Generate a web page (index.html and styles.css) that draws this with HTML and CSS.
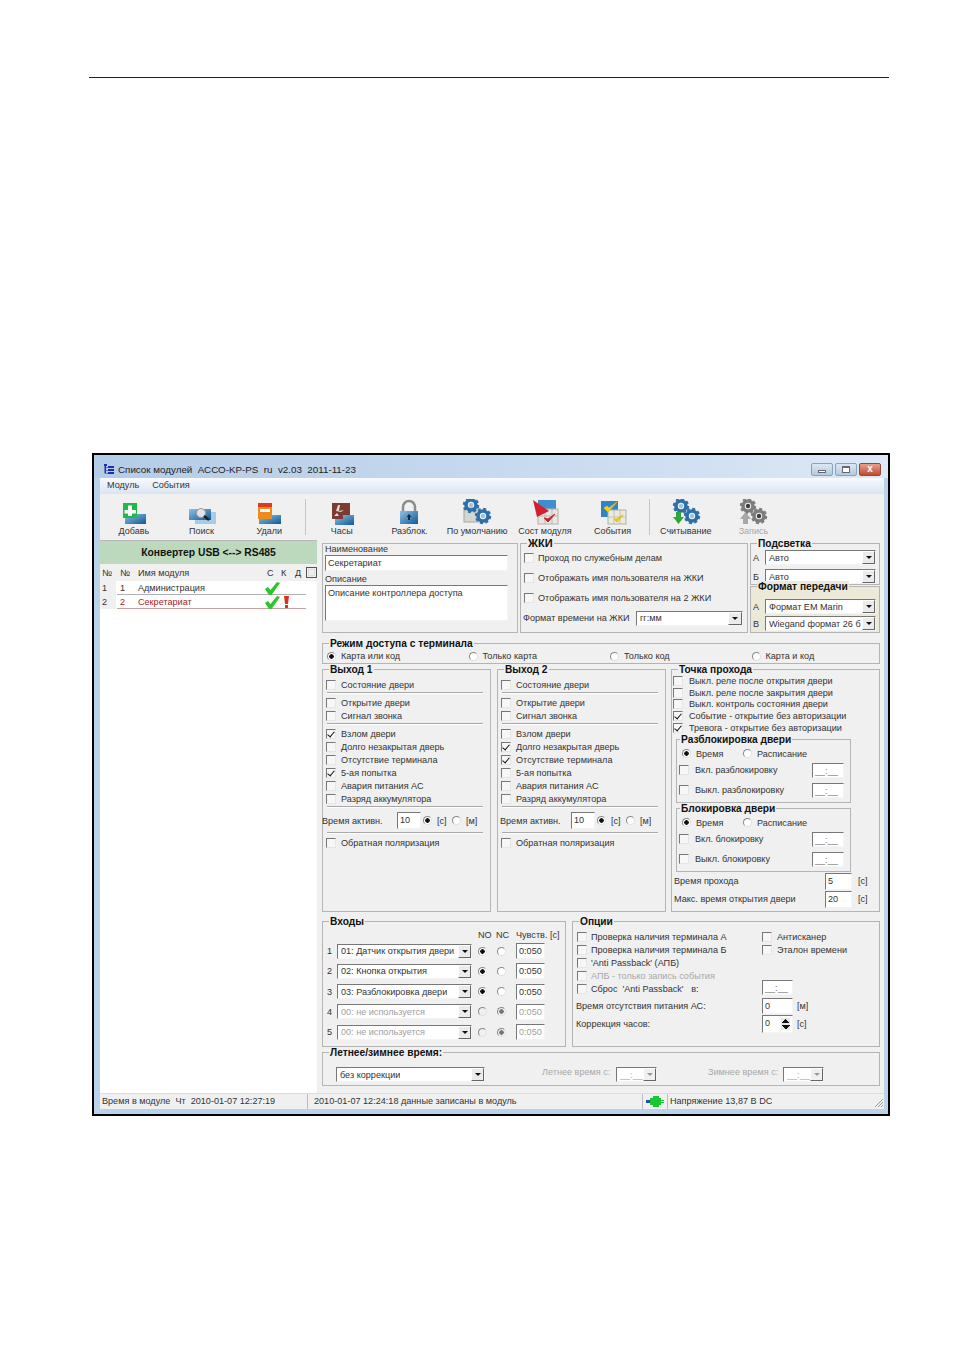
FILE: index.html
```html
<!DOCTYPE html>
<html lang="ru">
<head>
    <meta charset="UTF-8">
    <title>Список модулей АССО-KP-PS</title>
    <link rel="stylesheet" href="styles.css">
</head>
<body>
    <svg class="defs" width="0" height="0">
        <defs>
            <g id="gear-blue">
                <circle r="5" fill="none" stroke="#2f6fa8" stroke-width="3.6"/>
                <circle r="7" fill="none" stroke="#2f6fa8" stroke-width="2.4" stroke-dasharray="3 2.5"/>
                <circle r="2.2" fill="#9cc6e6"/>
            </g>
            <g id="gear-grey">
                <circle r="5" fill="none" stroke="#7d7d7d" stroke-width="3.6"/>
                <circle r="7" fill="none" stroke="#7d7d7d" stroke-width="2.4" stroke-dasharray="3 2.5"/>
                <circle r="2.2" fill="#3d3d3d"/>
            </g>
            <linearGradient id="card" x1="0" y1="0" x2="1" y2="1">
                <stop offset="0" stop-color="#8fc0e4"/>
                <stop offset="1" stop-color="#0f5a96"/>
            </linearGradient>
        </defs>
    </svg>

    <div class="rule"></div>

    <div class="window">
        <div class="titlebar">
            <svg class="app-icon" width="11" height="11" viewBox="0 0 11 11">
                <path d="M1 0h3v2H3v1h2V2h6v2H5V3.500H3V6h2V5h6v2H5V6.500H3V9h2V8h6v2H5V9.500H1.500V2H1z" fill="#1c2fb0"/>
            </svg>
            <span class="title-text">Список модулей&nbsp; АССО-KP-PS &nbsp;ru &nbsp;v2.03&nbsp; 2011-11-23</span>
            <div class="win-buttons">
                <span class="win-btn"><i class="glyph-min"></i></span>
                <span class="win-btn"><i class="glyph-max"></i></span>
                <span class="win-btn win-close">x</span>
            </div>
        </div>

        <div class="menubar">
            <span>Модуль</span>
            <span>События</span>
        </div>

        <div class="toolbar">
            <div class="tool">
                <svg width="30" height="26" viewBox="0 0 30 26">
                    <rect x="6" y="15" width="21" height="10" fill="url(#card)"/>
                    <rect x="4" y="4" width="14" height="15" fill="#21b84a"/>
                    <path d="M9 6.500h4v4.500h4v3.500h-4V17H9v-2.500H5.500V11H9z" fill="#fff"/>
                </svg>
                <span>Добавь</span>
            </div>
            <div class="tool">
                <svg width="30" height="26" viewBox="0 0 30 26">
                    <rect x="8" y="13" width="21" height="12" fill="#a9cbe6"/>
                    <rect x="2" y="10" width="22" height="11" fill="url(#card)"/>
                    <circle cx="14" cy="14" r="4.500" fill="#e4e4e4" stroke="#9a9a9a"/>
                    <path d="M17 17l5 4" stroke="#222" stroke-width="2.500"/>
                </svg>
                <span>Поиск</span>
            </div>
            <div class="tool">
                <svg width="30" height="26" viewBox="0 0 30 26">
                    <rect x="5" y="16" width="22" height="9" fill="url(#card)"/>
                    <rect x="4" y="4" width="14" height="16" fill="#ef8a1e"/>
                    <rect x="4" y="4" width="14" height="4" fill="#dd3b1c"/>
                    <rect x="6" y="10" width="10" height="3" fill="#fff"/>
                </svg>
                <span>Удали</span>
            </div>
            <div class="tool-sep"></div>
            <div class="tool">
                <svg width="30" height="26" viewBox="0 0 30 26">
                    <rect x="8" y="16" width="19" height="10" fill="url(#card)"/>
                    <path d="M5 4h18v12H16v4H5z" fill="#7b3b30"/>
                    <path d="M13 6l-1 6 5-1-3 2-5-1 2-6zM7 17l3-3 2 3z" fill="#e8d6d0"/>
                </svg>
                <span>Часы</span>
            </div>
            <div class="tool">
                <svg width="30" height="26" viewBox="0 0 30 26">
                    <path d="M9 12V8a6 6 0 0 1 12 0v4" fill="none" stroke="#8d8d8d" stroke-width="2.500"/>
                    <rect x="6" y="12" width="18" height="13" fill="url(#card)"/>
                    <path d="M15 15l2.500 3H16v3h-2v-3h-1.500z" fill="#0a2a44"/>
                </svg>
                <span>Разблок.</span>
            </div>
            <div class="tool">
                <svg width="30" height="26" viewBox="0 0 30 26">
                    <rect x="2" y="9" width="15" height="14" fill="#d6d6d0" stroke="#a5a5a0"/>
                    <use href="#gear-blue" x="9" y="6"/>
                    <use href="#gear-blue" x="21" y="17"/>
                </svg>
                <span>По умолчанию</span>
            </div>
            <div class="tool">
                <svg width="30" height="26" viewBox="0 0 30 26">
                    <rect x="8" y="1" width="18" height="15" fill="#3f8fd0"/>
                    <rect x="8" y="10" width="20" height="15" fill="#e6e6e2" stroke="#b0b0aa"/>
                    <path d="M15 10v15M22 10v15M8 17h20" stroke="#b9b9b4"/>
                    <path d="M3 1l16 11-12 6z" fill="#d3202c"/>
                    <path d="M14 19l4 4 7-8-7 5z" fill="#c8232b" stroke="#c8232b"/>
                </svg>
                <span>Сост модуля</span>
            </div>
            <div class="tool">
                <svg width="30" height="26" viewBox="0 0 30 26">
                    <rect x="3" y="2" width="17" height="16" fill="#2f83c8"/>
                    <rect x="10" y="11" width="18" height="14" fill="#ecebd9" stroke="#b0b0aa"/>
                    <path d="M16 11v14M22 11v14M10 18h18" stroke="#c2c2b8"/>
                    <path d="M6 9l4 4 9-10-8 6-2-2z" fill="#f2d21a" stroke="#e0bc10"/>
                    <path d="M16 20l3 3 6-7-6 4z" fill="#f2d21a" stroke="#e0bc10"/>
                </svg>
                <span>События</span>
            </div>
            <div class="tool-sep tool-sep-2"></div>
            <div class="tool">
                <svg width="30" height="26" viewBox="0 0 30 26">
                    <use href="#gear-blue" x="10" y="7"/>
                    <use href="#gear-blue" x="21" y="17"/>
                    <path d="M5 13h5v5h3l-5.500 7L2 18h3z" fill="#2fa63a"/>
                </svg>
                <span>Считывание</span>
            </div>
            <div class="tool tool-off">
                <svg width="30" height="26" viewBox="0 0 30 26">
                    <use href="#gear-grey" x="10" y="7"/>
                    <use href="#gear-grey" x="21" y="17"/>
                    <path d="M5 25v-5H2l5.500-7 5.500 7h-3v5z" fill="#a8a8a8"/>
                </svg>
                <span>Запись</span>
            </div>
        </div>

        <div class="workspace">
            <div class="modules">
                <div class="converter">Конвертер USB &lt;--&gt; RS485</div>
                <div class="mod-head">
                    <span class="col-a">№</span>
                    <span class="col-b">№</span>
                    <span class="col-name">Имя модуля</span>
                    <span class="col-c">С</span>
                    <span class="col-c">К</span>
                    <span class="col-c">Д</span>
                    <span class="mod-toggle"></span>
                </div>
                <div class="mod-row">
                    <span class="col-a">1</span>
                    <span class="col-b">1</span>
                    <span class="col-name">Администрация</span>
                    <svg class="tick" width="15" height="13" viewBox="0 0 15 13"><path d="M0 7l3-2 2.500 3L12 0l3 1-8.500 12h-2.500z" fill="#2cc52c"/></svg>
                </div>
                <div class="mod-row mod-alert">
                    <span class="col-a">2</span>
                    <span class="col-b">2</span>
                    <span class="col-name">Секретариат</span>
                    <svg class="tick" width="15" height="13" viewBox="0 0 15 13"><path d="M0 7l3-2 2.500 3L12 0l3 1-8.500 12h-2.500z" fill="#2cc52c"/></svg>
                    <svg class="bang" width="5" height="12" viewBox="0 0 5 12"><path d="M0 0h5l-1 8H1zM1 9h3v3H1z" fill="#d8321e"/></svg>
                </div>
            </div>

            <div class="panels">
                <div class="row-top">
                    <div class="group name-box">
                        <div class="cap">Наименование</div>
                        <div class="field name-field">Секретариат</div>
                        <div class="cap cap-second">Описание</div>
                        <div class="field memo">Описание контроллера доступа</div>
                    </div>

                    <div class="group lcd-box">
                        <div class="group-title lcd-title">ЖКИ</div>
                        <label class="line"><input type="checkbox">Проход по служебным делам</label>
                        <label class="line"><input type="checkbox">Отображать имя пользователя на ЖКИ</label>
                        <label class="line"><input type="checkbox">Отображать имя пользователя на 2 ЖКИ</label>
                        <div class="line lcd-format">
                            <span class="lcd-format-label">Формат времени на ЖКИ</span>
                            <div class="combo lcd-combo"><span>гг:мм</span><i class="drop"></i></div>
                        </div>
                    </div>

                    <div class="side-col">
                        <div class="group backlight">
                            <div class="group-title">Подсветка</div>
                            <div class="side-row"><span class="side-key">А</span><div class="combo"><span>Авто</span><i class="drop"></i></div></div>
                            <div class="side-row"><span class="side-key">Б</span><div class="combo"><span>Авто</span><i class="drop"></i></div></div>
                        </div>
                        <div class="group format">
                            <div class="group-title">Формат передачи</div>
                            <div class="side-row"><span class="side-key">А</span><div class="combo"><span>Формат EM Marin</span><i class="drop"></i></div></div>
                            <div class="side-row"><span class="side-key">В</span><div class="combo"><span>Wiegand формат 26 б</span><i class="drop"></i></div></div>
                        </div>
                    </div>
                </div>

                <div class="group access">
                    <div class="group-title">Режим доступа с терминала</div>
                    <label class="pick"><input type="radio" name="access" checked>Карта или код</label>
                    <label class="pick"><input type="radio" name="access">Только карта</label>
                    <label class="pick"><input type="radio" name="access">Только код</label>
                    <label class="pick"><input type="radio" name="access">Карта и код</label>
                </div>

                <div class="row-mid">
                    <div class="group output out-1">
                        <div class="group-title">Выход 1</div>
                        <label class="line"><input type="checkbox">Состояние двери</label>
                        <hr>
                        <label class="line"><input type="checkbox">Открытие двери</label>
                        <label class="line"><input type="checkbox">Сигнал звонка</label>
                        <hr>
                        <label class="line"><input type="checkbox" checked>Взлом двери</label>
                        <label class="line"><input type="checkbox">Долго незакрытая дверь</label>
                        <label class="line"><input type="checkbox">Отсутствие терминала</label>
                        <label class="line"><input type="checkbox" checked>5-ая попытка</label>
                        <label class="line"><input type="checkbox">Авария питания АС</label>
                        <label class="line"><input type="checkbox">Разряд аккумулятора</label>
                        <hr>
                        <div class="time-row">
                            <span class="time-label">Время активн.</span>
                            <div class="field time-field">10</div>
                            <input type="radio" name="t1" checked><span class="unit">[с]</span>
                            <input type="radio" name="t1"><span class="unit">[м]</span>
                        </div>
                        <hr>
                        <label class="line"><input type="checkbox">Обратная поляризация</label>
                    </div>

                    <div class="group output out-2">
                        <div class="group-title">Выход 2</div>
                        <label class="line"><input type="checkbox">Состояние двери</label>
                        <hr>
                        <label class="line"><input type="checkbox">Открытие двери</label>
                        <label class="line"><input type="checkbox">Сигнал звонка</label>
                        <hr>
                        <label class="line"><input type="checkbox">Взлом двери</label>
                        <label class="line"><input type="checkbox" checked>Долго незакрытая дверь</label>
                        <label class="line"><input type="checkbox" checked>Отсутствие терминала</label>
                        <label class="line"><input type="checkbox">5-ая попытка</label>
                        <label class="line"><input type="checkbox">Авария питания АС</label>
                        <label class="line"><input type="checkbox">Разряд аккумулятора</label>
                        <hr>
                        <div class="time-row">
                            <span class="time-label">Время активн.</span>
                            <div class="field time-field">10</div>
                            <input type="radio" name="t2" checked><span class="unit">[с]</span>
                            <input type="radio" name="t2"><span class="unit">[м]</span>
                        </div>
                        <hr>
                        <label class="line"><input type="checkbox">Обратная поляризация</label>
                    </div>

                    <div class="group point">
                        <div class="group-title">Точка прохода</div>
                        <label class="line-tight"><input type="checkbox">Выкл. реле после открытия двери</label>
                        <label class="line-tight"><input type="checkbox">Выкл. реле после закрытия двери</label>
                        <label class="line-tight"><input type="checkbox">Выкл. контроль состояния двери</label>
                        <label class="line-tight"><input type="checkbox" checked>Событие - открытие без авторизации</label>
                        <label class="line-tight"><input type="checkbox" checked>Тревога - открытие без авторизации</label>

                        <div class="group sub">
                            <div class="group-title">Разблокировка двери</div>
                            <div class="sub-mode">
                                <label class="sub-pick"><input type="radio" name="u" checked>Время</label>
                                <label class="sub-pick"><input type="radio" name="u">Расписание</label>
                            </div>
                            <div class="sub-row"><label class="sub-check"><input type="checkbox">Вкл. разблокировку</label><div class="field sub-field">__:__</div></div>
                            <div class="sub-row sub-row-2"><label class="sub-check"><input type="checkbox">Выкл. разблокировку</label><div class="field sub-field">__:__</div></div>
                        </div>

                        <div class="group sub sub-lock">
                            <div class="group-title">Блокировка двери</div>
                            <div class="sub-mode">
                                <label class="sub-pick"><input type="radio" name="l" checked>Время</label>
                                <label class="sub-pick"><input type="radio" name="l">Расписание</label>
                            </div>
                            <div class="sub-row"><label class="sub-check"><input type="checkbox">Вкл. блокировку</label><div class="field sub-field">__:__</div></div>
                            <div class="sub-row sub-row-2"><label class="sub-check"><input type="checkbox">Выкл. блокировку</label><div class="field sub-field">__:__</div></div>
                        </div>

                        <div class="pass-row"><span class="pass-label">Время прохода</span><div class="field pass-field">5</div><span>[с]</span></div>
                        <div class="pass-row"><span class="pass-label">Макс. время открытия двери</span><div class="field pass-field">20</div><span>[с]</span></div>
                    </div>
                </div>

                <div class="row-low">
                    <div class="group inputs">
                        <div class="group-title">Входы</div>
                        <div class="in-head"><span class="in-no">NO</span><span class="in-nc">NC</span><span class="in-sens">Чувств. [с]</span></div>
                        <div class="in-row"><span class="in-num">1</span><div class="combo in-combo"><span>01: Датчик открытия двери</span><i class="drop"></i></div><input type="radio" name="i1" checked><input type="radio" name="i1"><div class="field in-field">0:050</div></div>
                        <div class="in-row"><span class="in-num">2</span><div class="combo in-combo"><span>02: Кнопка открытия</span><i class="drop"></i></div><input type="radio" name="i2" checked><input type="radio" name="i2"><div class="field in-field">0:050</div></div>
                        <div class="in-row"><span class="in-num">3</span><div class="combo in-combo"><span>03: Разблокировка двери</span><i class="drop"></i></div><input type="radio" name="i3" checked><input type="radio" name="i3"><div class="field in-field">0:050</div></div>
                        <div class="in-row in-off"><span class="in-num">4</span><div class="combo in-combo"><span>00: не используется</span><i class="drop"></i></div><input type="radio" name="i4"><input type="radio" name="i4" checked><div class="field in-field">0:050</div></div>
                        <div class="in-row in-off"><span class="in-num">5</span><div class="combo in-combo"><span>00: не используется</span><i class="drop"></i></div><input type="radio" name="i5"><input type="radio" name="i5" checked><div class="field in-field">0:050</div></div>
                    </div>

                    <div class="group options">
                        <div class="group-title">Опции</div>
                        <div class="opt-row"><label class="opt-main"><input type="checkbox">Проверка наличия терминала А</label><label class="opt-alt"><input type="checkbox">Антисканер</label></div>
                        <div class="opt-row"><label class="opt-main"><input type="checkbox">Проверка наличия терминала Б</label><label class="opt-alt"><input type="checkbox">Эталон времени</label></div>
                        <div class="opt-row"><label class="opt-main"><input type="checkbox">'Anti Passback' (АПБ)</label></div>
                        <div class="opt-row opt-off"><label class="opt-main"><input type="checkbox">АПБ - только запись события</label></div>
                        <div class="opt-row"><label class="opt-main"><input type="checkbox">Сброс &nbsp;'Anti Passback' &nbsp;&nbsp;в:</label><div class="field opt-field opt-field-up">__:__</div></div>
                        <div class="opt-entry"><span class="opt-label">Время отсутствия питания АС:</span><div class="field opt-field">0</div><span class="opt-unit">[м]</span></div>
                        <div class="opt-entry opt-entry-2"><span class="opt-label">Коррекция часов:</span><div class="field opt-field opt-spin">0<i class="spin"></i></div><span class="opt-unit">[с]</span></div>
                    </div>
                </div>

                <div class="group summer">
                    <div class="group-title">Летнее/зимнее время:</div>
                    <div class="combo summer-combo"><span>без коррекции</span><i class="drop"></i></div>
                    <span class="summer-label summer-a">Летнее время с:</span>
                    <div class="combo small-combo"><span>__:__</span><i class="drop"></i></div>
                    <span class="summer-label summer-b">Зимнее время с:</span>
                    <div class="combo small-combo"><span>__:__</span><i class="drop"></i></div>
                </div>
            </div>
        </div>

        <div class="statusbar">
            <div class="st-cell st-time">Время в модуле &nbsp;Чт &nbsp;2010-01-07 12:27:19</div>
            <div class="st-cell st-msg">2010-01-07 12:24:18 данные записаны в модуль</div>
            <div class="st-cell st-plug">
                <svg width="18" height="11" viewBox="0 0 18 11"><path d="M0 4h4v3H0z" fill="#1f4fb4"/><path d="M4 2h3V0h6v2h2v2h3v1h-3v1h3v1h-3v2h-2v2H7V9H4z" fill="#19c733"/></svg>
            </div>
            <div class="st-cell st-volt">Напряжение 13,87 В DC</div>
            <svg class="grip" width="10" height="10" viewBox="0 0 10 10"><path d="M9 1L1 9M9 4L4 9M9 7L7 9" stroke="#9a9a9a"/></svg>
        </div>
    </div>
</body>
</html>
```

FILE: styles.css
```css
* {
    box-sizing: border-box;
}
body {
    margin: 0;
    background: #fff;
    font-family: "Liberation Sans", Arial, sans-serif;
    font-size: 9.1px;
    color: #333;
}
.defs {
    position: absolute;
}
.rule {
    width: 800px;
    height: 1px;
    margin: 77px 0 0 89px;
    background: #222;
}

/* window frame */
.window {
    display: flex;
    flex-direction: column;
    width: 798px;
    height: 663px;
    margin: 375px 0 0 92px;
    padding: 0 4px 5px 6px;
    border: 2px solid #000;
    background: #b9d3ec;
}
.titlebar {
    display: flex;
    align-items: center;
    height: 23px;
    flex: none;
    margin: 0 -4px 0 -6px;
    padding: 5px 7px 0 9px;
    background: linear-gradient(90deg, #b4cce6, #c6d9ee 50%, #dce8f6);
}
.app-icon {
    margin-right: 4px;
}
.title-text {
    font-size: 9.800px;
    color: #222;
}
.win-buttons {
    display: flex;
    gap: 2px;
    margin-left: auto;
}
.win-btn {
    display: flex;
    align-items: center;
    justify-content: center;
    width: 22px;
    height: 13px;
    border: 1px solid #8aa2bc;
    border-radius: 2px;
    background: linear-gradient(#dbe7f3, #b5c9dd);
}
.win-close {
    background: linear-gradient(#e8a08c, #c24a30);
    border-color: #8c4a3c;
    color: #fff;
    font-weight: bold;
    font-size: 10px;
    line-height: 1;
}
.glyph-min {
    width: 8px;
    height: 3px;
    margin-top: 5px;
    border: 1px solid #667;
    background: #fff;
}
.glyph-max {
    width: 8px;
    height: 7px;
    border: 1px solid #667;
    border-top-width: 2px;
    background: #fff;
}
.menubar {
    display: flex;
    align-items: center;
    gap: 13px;
    height: 16px;
    flex: none;
    padding: 0 0 2px 7px;
    background: linear-gradient(#f8fafd, #d9e4f2);
}

/* toolbar */
.toolbar {
    display: flex;
    height: 46px;
    flex: none;
    padding-top: 5px;
    background: #f0f0f0;
}
.tool {
    display: flex;
    flex-direction: column;
    align-items: center;
    width: 67.7px;
    flex: none;
    font-size: 9px;
}
.tool span {
    margin-top: 1px;
    white-space: nowrap;
}
.tool-off {
    color: #a8a8a8;
}
.tool-sep {
    width: 1px;
    height: 36px;
    margin: 0 1.500px 0 2.400px;
    background: #c4c4c4;
}
.tool-sep-2 {
    margin: 0 2px 0 2.500px;
}

/* left list */
.workspace {
    display: flex;
    height: 553px;
    flex: none;
    background: #f0f0f0;
}
.modules {
    width: 217px;
    flex: none;
    margin-right: 1px;
    background: #fff;
    border-top: 1px solid #b8b8b8;
}
.converter {
    height: 23px;
    line-height: 23px;
    text-align: center;
    font-weight: bold;
    font-size: 10.300px;
    color: #111;
    background: #bcd9bd;
}
.mod-head {
    display: flex;
    align-items: center;
    height: 17px;
    padding-left: 2px;
    background: #f0f0f0;
}
.col-a {
    width: 18px;
    flex: none;
}
.col-b {
    width: 18px;
    flex: none;
}
.col-name {
    width: 129px;
    flex: none;
}
.col-c {
    width: 14px;
    flex: none;
}
.mod-toggle {
    width: 11px;
    height: 11px;
    margin-left: -3px;
    border: 1px solid #555;
    outline: 1px solid #ddd;
    outline-offset: -3px;
    background: #eee;
}
.mod-row {
    display: flex;
    align-items: center;
    height: 14px;
    padding-left: 2px;
    background: linear-gradient(90deg, #f0f0f0 16px, #fff 16px);
    position: relative;
}
.mod-row::after {
    content: "";
    position: absolute;
    left: 17px;
    width: 189px;
    bottom: 0;
    height: 1px;
    background: #b0b0b0;
}
.mod-alert {
    color: #a8242a;
}
.mod-alert .col-a {
    color: #333;
}
.mod-alert::after {
    background: #c9a0a0;
}
.tick {
    margin-left: -2px;
    position: relative;
    z-index: 1;
}
.bang {
    margin-left: 4px;
}

/* panels */
.panels {
    width: 566px;
    flex: none;
    padding: 3px 4px 0 4px;
}
.group {
    position: relative;
    border: 1px solid #b4b4b4;
    background: #f0f0f0;
}
.group-title {
    position: absolute;
    top: -6px;
    left: 6px;
    padding: 0 1px;
    background: inherit;
    font-weight: bold;
    font-size: 10.200px;
    line-height: 11px;
    color: #111;
    white-space: nowrap;
}
.sub .group-title {
    left: 3px;
}
.field {
    height: 16px;
    padding: 1px 2px;
    background: #fff;
    border: 1px solid;
    border-color: #777 #f4f4f4 #f4f4f4 #777;
    line-height: 13px;
    white-space: nowrap;
    overflow: hidden;
}
.combo {
    display: flex;
    align-items: center;
    justify-content: space-between;
    flex: 1;
    height: 15px;
    padding-left: 3px;
    background: #fff;
    border: 1px solid;
    border-color: #777 #f4f4f4 #f4f4f4 #777;
    white-space: nowrap;
    overflow: hidden;
}
.combo span {
    overflow: hidden;
}
.drop {
    position: relative;
    width: 13px;
    height: 13px;
    flex: none;
    background: #ebebeb;
    border: 1px solid;
    border-color: #fff #666 #666 #fff;
}
.drop::after {
    content: "";
    position: absolute;
    left: 3px;
    top: 4px;
    border: 3px solid transparent;
    border-top: 3px solid #111;
    border-bottom: 0;
}

input[type="checkbox"] {
    appearance: none;
    position: relative;
    width: 10px;
    height: 10px;
    flex: none;
    margin: 0;
    background: #f7f7f7;
    border: 1px solid;
    border-color: #777 #e6e6e6 #e6e6e6 #777;
}
input[type="checkbox"]:checked::after {
    content: "";
    position: absolute;
    left: 2px;
    top: 0;
    width: 3px;
    height: 6px;
    border: solid #111;
    border-width: 0 1.500px 1.500px 0;
    transform: rotate(40deg);
}
input[type="radio"] {
    appearance: none;
    width: 9px;
    height: 9px;
    flex: none;
    margin: 0;
    border: 1px solid;
    border-color: #888 #e0e0e0 #e0e0e0 #888;
    border-radius: 50%;
    background: #fff;
}
input[type="radio"]:checked {
    background: radial-gradient(circle, #111 0 2px, #fff 2.500px);
}
hr {
    height: 2px;
    margin: 1px 7px 2px 1px;
    border: 0;
    border-top: 1px solid #a8a8a8;
    border-bottom: 1px solid #fff;
}
.line,
.line-tight {
    display: flex;
    align-items: center;
    gap: 5px;
    height: 13px;
    white-space: nowrap;
}
.line-tight {
    height: 11.800px;
}

/* top row */
.row-top {
    display: flex;
    gap: 2px;
    height: 90px;
}
.name-box {
    width: 196px;
    padding-left: 2px;
}
.cap {
    height: 11px;
    line-height: 11px;
}
.cap-second {
    height: 12px;
    margin-top: 2px;
    line-height: 12px;
}
.name-field {
    width: 183px;
}
.memo {
    width: 183px;
    height: 36px;
}
.lcd-box {
    width: 228px;
    padding: 4px 0 0 3px;
}
.lcd-title {
    font-size: 11px;
}
.lcd-box .line {
    height: 20px;
    gap: 4px;
}
.lcd-format-label {
    margin-left: -1px;
    width: 109px;
    flex: none;
}
.lcd-format {
    padding-right: 4px;
}
.lcd-format .drop {
    width: 14px;
}
.side-col {
    display: flex;
    flex-direction: column;
    gap: 1px;
    width: 130px;
}
.backlight {
    height: 42px;
    padding: 6px 3px 0 2px;
}
.backlight .side-row {
    margin-bottom: 4px;
}
.format {
    height: 47px;
    padding: 12px 3px 0 2px;
    background: #ece9d8;
}
.side-row {
    display: flex;
    align-items: center;
    height: 15px;
    margin-bottom: 2px;
}
.side-key {
    width: 12px;
    flex: none;
}

/* access */
.access {
    display: flex;
    height: 21px;
    margin-top: 10px;
    padding: 6px 0 0 4px;
}
.pick {
    display: flex;
    align-items: center;
    flex: none;
    gap: 5px;
    width: 141.500px;
    height: 12px;
}
.pick:last-child {
    width: auto;
}

/* outputs and door */
.row-mid {
    display: flex;
    height: 243px;
    margin-top: 5px;
}
.output {
    width: 169px;
    padding: 8px 0 0 3px;
    margin-right: 6px;
}
.out-2 {
    margin-right: 5px;
}
.time-row {
    display: flex;
    align-items: center;
    height: 21px;
}
.time-label {
    flex: none;
    width: 75px;
    margin-left: -4px;
}
.out-2 .time-label {
    width: 71px;
    margin-left: -1px;
}
.time-field {
    width: 24px;
    height: 17px;
    margin-right: 2px;
}
.unit {
    width: 13px;
    margin: 0 2px 0 5px;
}
.point {
    width: 209px;
    padding: 5px 0 0 1px;
}
.point .line-tight {
    gap: 6px;
}
.sub {
    width: 175px;
    height: 64px;
    margin: 5px 0 0 3px;
    padding: 8px 0 0 2px;
}
.sub-lock {
    margin-top: 5px;
}
.sub-mode {
    display: flex;
    height: 12px;
    padding-left: 3px;
}
.sub-pick {
    display: flex;
    align-items: center;
    gap: 5px;
    width: 61px;
}
.sub-row {
    display: flex;
    align-items: center;
    justify-content: space-between;
    height: 15px;
    margin-top: 3px;
    padding-right: 6px;
}
.sub-row-2 {
    margin-top: 5px;
}
.sub-check {
    display: flex;
    align-items: center;
    gap: 6px;
}
.sub-field {
    width: 32px;
    height: 15px;
    color: #777;
}
.pass-row {
    display: flex;
    align-items: center;
    height: 17px;
    margin-top: 1px;
    padding-left: 1px;
}
.pass-label {
    width: 151px;
    flex: none;
}
.pass-field {
    width: 27px;
    height: 17px;
    margin-right: 6px;
}

/* inputs and options */
.row-low {
    display: flex;
    gap: 6px;
    height: 126px;
    margin-top: 9px;
}
.inputs {
    width: 244px;
    padding: 7px 0 0 4px;
}
.in-head {
    display: flex;
    height: 12px;
    line-height: 12px;
    margin-bottom: 2px;
}
.in-no {
    width: 18px;
    margin-left: 151px;
}
.in-nc {
    width: 20px;
}
.in-row {
    display: flex;
    align-items: center;
    height: 16px;
    margin-bottom: 4.250px;
}
.in-num {
    width: 10px;
    flex: none;
}
.in-combo {
    flex: none;
    width: 135px;
}
.in-row input {
    margin-left: 6px;
}
.in-row input + input {
    margin-left: 10px;
}
.in-field {
    width: 29px;
    margin-left: 10px;
}
.in-off .combo,
.in-off .field {
    color: #a0a0a0;
}
.in-off input {
    background: #f0f0f0;
}
.in-off input:checked {
    background: radial-gradient(circle, #777 0 2px, #f0f0f0 2.500px);
}
.options {
    width: 308px;
    padding: 8px 0 0 4px;
}
.opt-row {
    display: flex;
    align-items: flex-end;
    height: 13px;
}
.opt-main {
    display: flex;
    align-items: center;
    gap: 4px;
    width: 185px;
    height: 13px;
    flex: none;
    white-space: nowrap;
}
.opt-alt {
    display: flex;
    align-items: center;
    gap: 5px;
    height: 13px;
}
.opt-off {
    color: #a8a8a8;
}
.opt-field {
    width: 31px;
    flex: none;
}
.opt-field-up {
    height: 15px;
    color: #777;
}
.opt-entry {
    display: flex;
    align-items: center;
    height: 16px;
    margin-top: 3px;
}
.opt-entry-2 {
    height: 18px;
    margin-top: 1px;
}
.opt-label {
    width: 185px;
    margin-left: -1px;
    margin-right: 1px;
    flex: none;
}
.opt-unit {
    margin-left: 4px;
}
.opt-spin {
    position: relative;
    height: 18px;
}
.spin {
    position: absolute;
    right: 2px;
    top: 2px;
    width: 9px;
    height: 12px;
    background:
        linear-gradient(135deg, transparent 50%, #111 50%) left 0 top 1px / 5px 4px no-repeat,
        linear-gradient(225deg, transparent 50%, #111 50%) right 0 top 1px / 4px 4px no-repeat,
        linear-gradient(45deg, transparent 50%, #111 50%) left 0 bottom 1px / 5px 4px no-repeat,
        linear-gradient(315deg, transparent 50%, #111 50%) right 0 bottom 1px / 4px 4px no-repeat,
        #e8e8e8;
}
.summer {
    display: flex;
    align-items: flex-start;
    height: 34px;
    margin-top: 5px;
    padding: 14px 0 0 13px;
    color: #a8a8a8;
}
.summer-combo {
    flex: none;
    width: 149px;
    color: #333;
}
.summer-label {
    width: 74px;
    flex: none;
}
.summer-a {
    margin-left: 57px;
}
.summer-b {
    margin-left: 51px;
    width: 75px;
}
.small-combo {
    flex: none;
    width: 41px;
}
.small-combo .drop {
    background: #f0f0f0;
}
.small-combo .drop::after {
    border-top-color: #999;
}

/* status bar */
.statusbar {
    display: flex;
    align-items: center;
    height: 16px;
    flex: none;
    position: relative;
    background: #f0f0f0;
    border-top: 1px solid #ddd;
}
.st-cell {
    height: 15px;
    padding-left: 2px;
    line-height: 15px;
    white-space: nowrap;
    border-right: 1px solid #bbb;
}
.st-time {
    width: 208px;
}
.st-msg {
    width: 335px;
    padding-left: 6px;
}
.st-plug {
    width: 25px;
    padding: 2px 0 0 3px;
}
.st-volt {
    border-right: 0;
}
.grip {
    position: absolute;
    right: 0;
    bottom: 1px;
}
```
